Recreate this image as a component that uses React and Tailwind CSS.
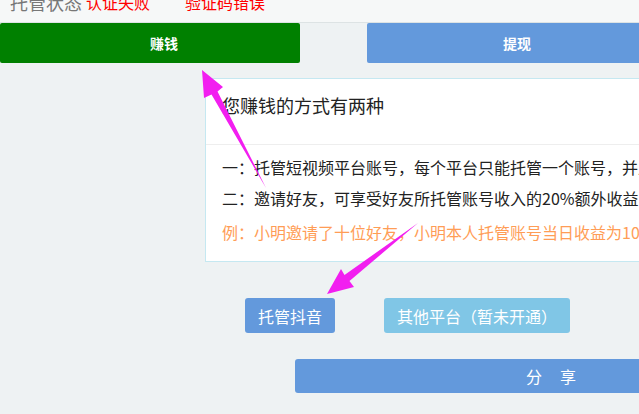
import React from 'react';

const cjk = "font-['Microsoft_YaHei','Noto_Sans_CJK_SC',sans-serif]";

function Arrows() {
  // magenta pointer arrows drawn over the page
  return (
    <svg className="absolute inset-0 pointer-events-none" width="639" height="414" viewBox="0 0 639 414">
      <polygon
        fill="#f21ef0"
        points="202,70 223,87 217.5,91.5 266,188 211.5,94.5 204,98"
      />
      <polygon
        fill="#f21ef0"
        points="327,294 341,269 344.5,275 418,223 349.5,281 354,287"
      />
    </svg>
  );
}

export default function App() {
  return (
    <div className={`relative w-[639px] h-[414px] overflow-hidden bg-[#eef2f3] ${cjk}`}>
      {/* Status bar */}
      <div className="h-[23px] bg-[#f6f8f8] border-b border-[#dde3e4] flex items-start whitespace-nowrap overflow-hidden">
        <div className="flex items-end -mt-[7px] pl-[10px] leading-[18px]">
          <span className="text-[18px] text-[#777]">托管状态</span>
          <span className="text-[16px] text-[#ff0000] ml-[4px]">认证失败</span>
          <span className="text-[16px] text-[#ff0000] ml-[35px]">验证码错误</span>
        </div>
      </div>

      {/* Top actions */}
      <div className="flex">
        <button className="w-[300px] h-[40px] shrink-0 rounded-[2px] bg-[#008000] text-white text-[14px] font-semibold text-left pl-[150px]">
          赚钱
        </button>
        <button className="w-[274px] h-[40px] shrink-0 ml-[67px] rounded-[2px] bg-[#6399dc] text-white text-[14px] font-semibold text-left pl-[136px]">
          提现
        </button>
      </div>

      {/* Info card */}
      <div className="ml-[205px] mt-[15px] w-[480px] bg-white border border-[#c5e8f1]">
        <div className="h-[66px] border-b border-[#eeeeee] pl-[16px] pt-[15px] text-[18px] leading-[22px] text-[#222] whitespace-nowrap">
          您赚钱的方式有两种
        </div>
        <div className="pl-[16px] pt-[7px] pb-[13px] text-[16px] leading-[31px] whitespace-nowrap">
          <p className="text-[#222]">一：托管短视频平台账号，每个平台只能托管一个账号，并且</p>
          <p className="text-[#222]">二：邀请好友，可享受好友所托管账号收入的20%额外收益</p>
          <p className="text-[#ff9d56] mt-[3px]">例：小明邀请了十位好友，小明本人托管账号当日收益为100</p>
        </div>
      </div>

      {/* Platform buttons */}
      <div className="flex ml-[245px] mt-[36px]">
        <button className="w-[90px] h-[35px] rounded-[3px] bg-[#6399dc] text-white text-[16px]">
          托管抖音
        </button>
        <button className="w-[186px] h-[35px] ml-[49px] rounded-[3px] bg-[#80c6e6] text-white text-[16px] whitespace-nowrap">
          其他平台（暂未开通）
        </button>
      </div>

      {/* Share */}
      <button className="block ml-[295px] mt-[26px] w-[462px] h-[34px] rounded-[3px] bg-[#6399dc] text-white text-[16px] text-left pl-[231px] tracking-[18px] whitespace-nowrap">
        分享
      </button>

      <Arrows />
    </div>
  );
}
